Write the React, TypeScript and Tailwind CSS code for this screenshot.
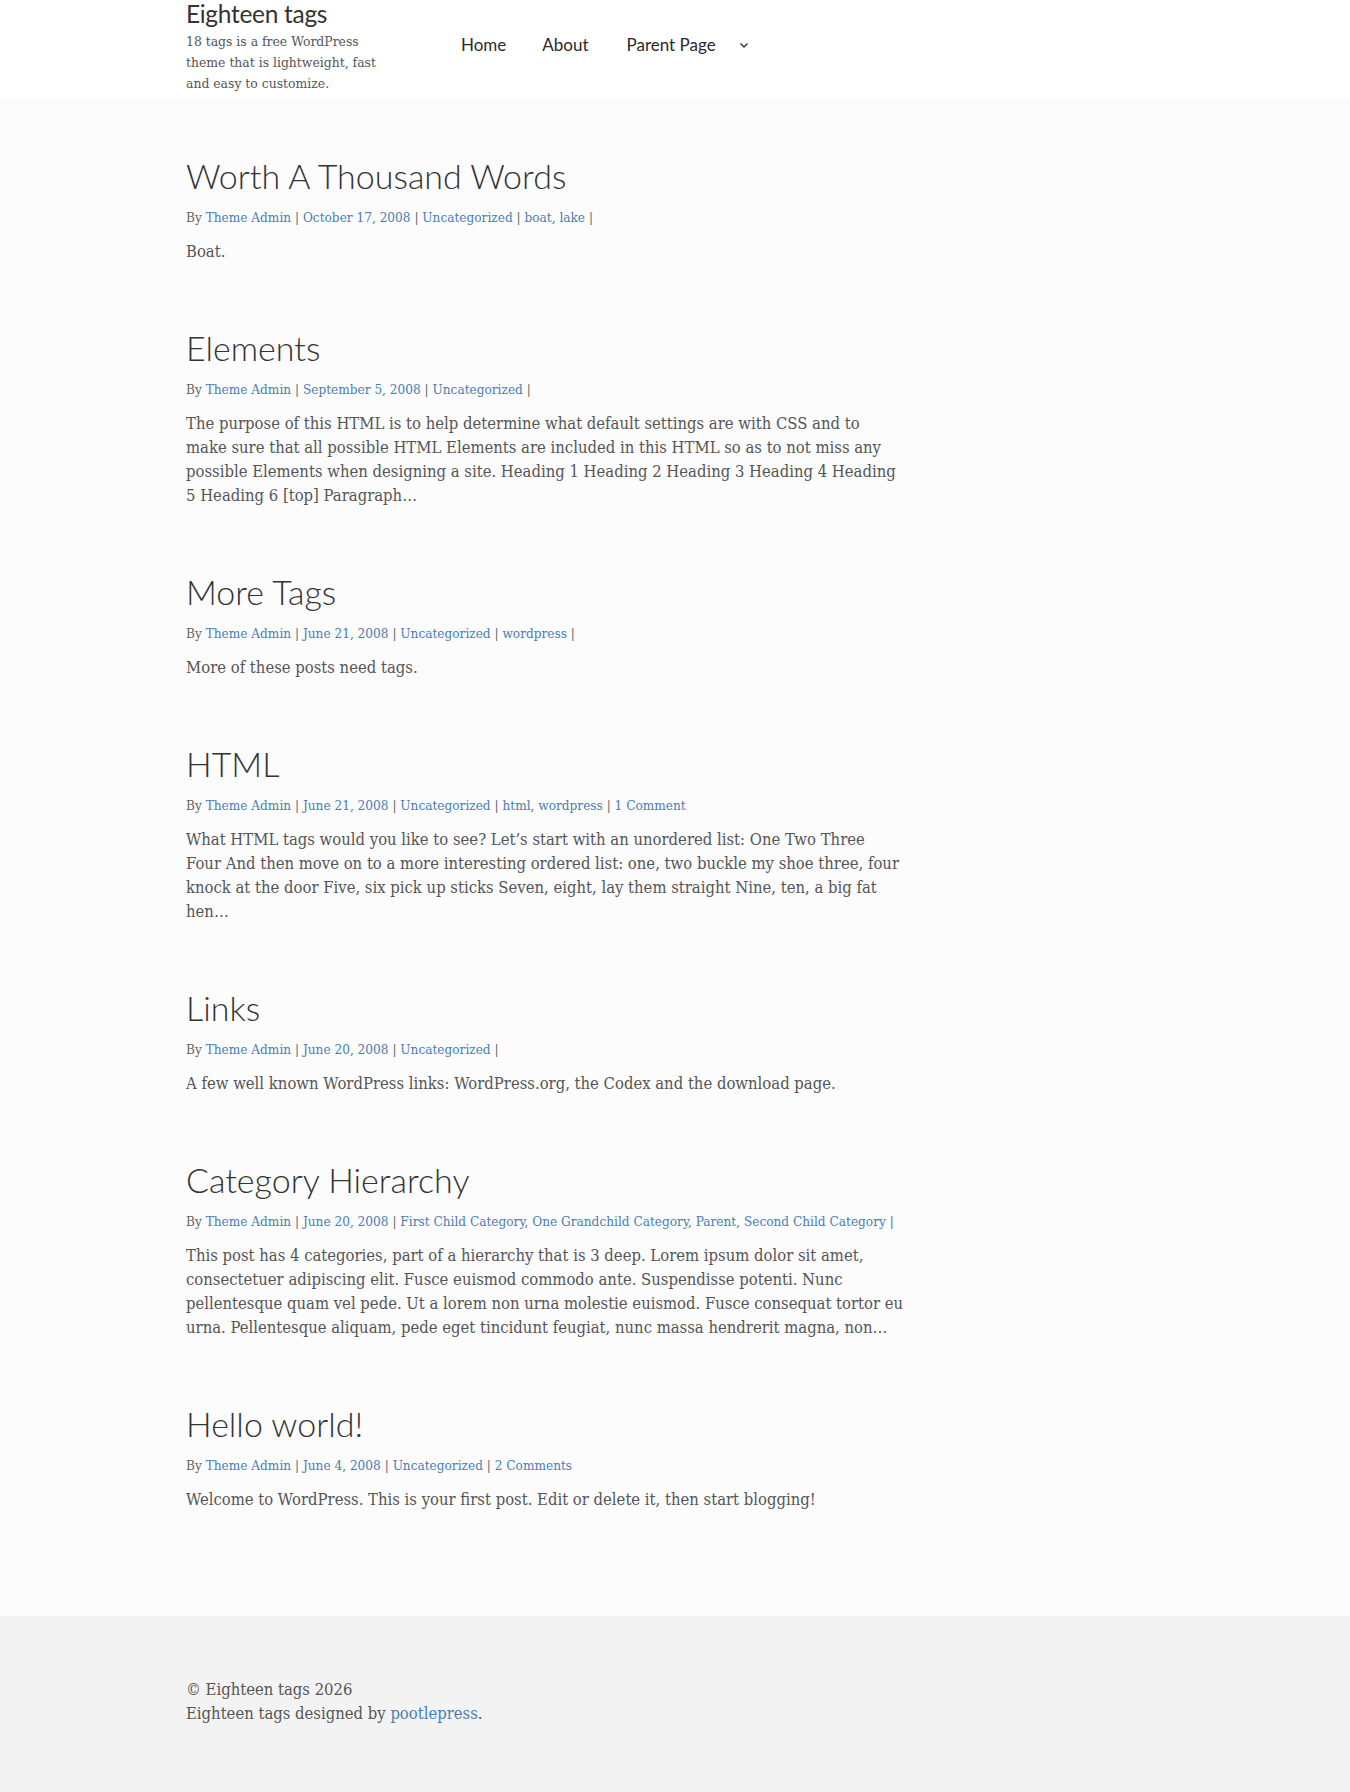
import React from 'react';

interface Post {
  title: string;
  date: string;
  cats: string[];
  tags?: string[];
  comments?: string;
  excerpt: string;
}

const posts: Post[] = [
  {
    title: 'Worth A Thousand Words',
    date: 'October 17, 2008',
    cats: ['Uncategorized'],
    tags: ['boat', 'lake'],
    excerpt: 'Boat.',
  },
  {
    title: 'Elements',
    date: 'September 5, 2008',
    cats: ['Uncategorized'],
    excerpt:
      'The purpose of this HTML is to help determine what default settings are with CSS and to make sure that all possible HTML Elements are included in this HTML so as to not miss any possible Elements when designing a site. Heading 1 Heading 2 Heading 3 Heading 4 Heading 5 Heading 6 [top] Paragraph…',
  },
  {
    title: 'More Tags',
    date: 'June 21, 2008',
    cats: ['Uncategorized'],
    tags: ['wordpress'],
    excerpt: 'More of these posts need tags.',
  },
  {
    title: 'HTML',
    date: 'June 21, 2008',
    cats: ['Uncategorized'],
    tags: ['html', 'wordpress'],
    comments: '1 Comment',
    excerpt:
      'What HTML tags would you like to see? Let’s start with an unordered list: One Two Three Four And then move on to a more interesting ordered list: one, two buckle my shoe three, four knock at the door Five, six pick up sticks Seven, eight, lay them straight Nine, ten, a big fat hen…',
  },
  {
    title: 'Links',
    date: 'June 20, 2008',
    cats: ['Uncategorized'],
    excerpt: 'A few well known WordPress links: WordPress.org, the Codex and the download page.',
  },
  {
    title: 'Category Hierarchy',
    date: 'June 20, 2008',
    cats: ['First Child Category', 'One Grandchild Category', 'Parent', 'Second Child Category'],
    excerpt:
      'This post has 4 categories, part of a hierarchy that is 3 deep. Lorem ipsum dolor sit amet, consectetuer adipiscing elit. Fusce euismod commodo ante. Suspendisse potenti. Nunc pellentesque quam vel pede. Ut a lorem non urna molestie euismod. Fusce consequat tortor eu urna. Pellentesque aliquam, pede eget tincidunt feugiat, nunc massa hendrerit magna, non…',
  },
  {
    title: 'Hello world!',
    date: 'June 4, 2008',
    cats: ['Uncategorized'],
    comments: '2 Comments',
    excerpt: 'Welcome to WordPress. This is your first post. Edit or delete it, then start blogging!',
  },
];

const serif = "font-['DejaVu_Serif_Condensed','DejaVu_Serif',serif]";
const display = "font-['Lato','Open_Sans',sans-serif]";

function LinkList({ items }: { items: string[] }) {
  return (
    <>
      {items.map((item, i) => (
        <React.Fragment key={item}>
          <a href="#" className="text-[#4a7db3]">
            {item}
          </a>
          {i < items.length - 1 && ', '}
        </React.Fragment>
      ))}
    </>
  );
}

function PostEntry({ post }: { post: Post }) {
  return (
    <article className="mb-[62px]">
      <h2 className={`${display} text-[34px] leading-[43px] font-light text-[#333]`}>
        <a href="#">{post.title}</a>
      </h2>
      <div className={`${serif} mt-[10px] text-[13.5px] leading-[20px] text-[#666]`}>
        By <a href="#" className="text-[#4a7db3]">Theme Admin</a> |{' '}
        <a href="#" className="text-[#4a7db3]">{post.date}</a> | <LinkList items={post.cats} /> |{' '}
        {post.tags && (
          <>
            <LinkList items={post.tags} /> |{' '}
          </>
        )}
        {post.comments && (
          <a href="#" className="text-[#4a7db3]">{post.comments}</a>
        )}
      </div>
      <p className={`${serif} mt-[13px] text-[16.5px] leading-[24px] text-[#555]`}>{post.excerpt}</p>
    </article>
  );
}

export default function App() {
  return (
    <div className="min-h-[1792px] flex flex-col bg-[#fcfcfc]">
      <header className="bg-white h-[98px]">
        <div className="w-[978px] mx-auto flex">
          <div className="w-[205px]">
            <h1 className={`${display} text-[24.5px] leading-[28px] text-[#333] tracking-[-0.3px]`}>
              Eighteen tags
            </h1>
            <p className={`${serif} mt-[3px] w-[200px] text-[13.8px] leading-[21px] text-[#555]`}>
              18 tags is a free WordPress theme that is lightweight, fast and easy to customize.
            </p>
          </div>
          <nav className={`${display} ml-[52px] mt-[34px] flex items-start text-[17px] leading-[22px] text-[#2a2a2a]`}>
            <a href="#" className="px-[18px]">Home</a>
            <a href="#" className="px-[18px]">About</a>
            <a href="#" className="pl-[20px] pr-[14px] flex items-center">
              Parent Page
              <svg className="ml-[22px] w-[12px] h-[12px]" viewBox="0 0 12 12" fill="none" stroke="#333" strokeWidth="1.3">
                <path d="M2.5 4.5 6 8l3.5-3.5" />
              </svg>
            </a>
          </nav>
        </div>
      </header>

      <main className="flex-1">
        <div className="w-[978px] mx-auto pt-[56px] pb-[40px]">
          <div className="w-[718px]">
            {posts.map((p) => (
              <PostEntry key={p.title} post={p} />
            ))}
          </div>
        </div>
      </main>

      <footer className="bg-[#f3f3f3] h-[176px]">
        <div className={`w-[978px] mx-auto pt-[62px] ${serif} text-[16.5px] leading-[24px] text-[#555]`}>
          <p>© Eighteen tags 2026</p>
          <p>
            Eighteen tags designed by <a href="#" className="text-[#4a7db3]">pootlepress</a>.
          </p>
        </div>
      </footer>
    </div>
  );
}
